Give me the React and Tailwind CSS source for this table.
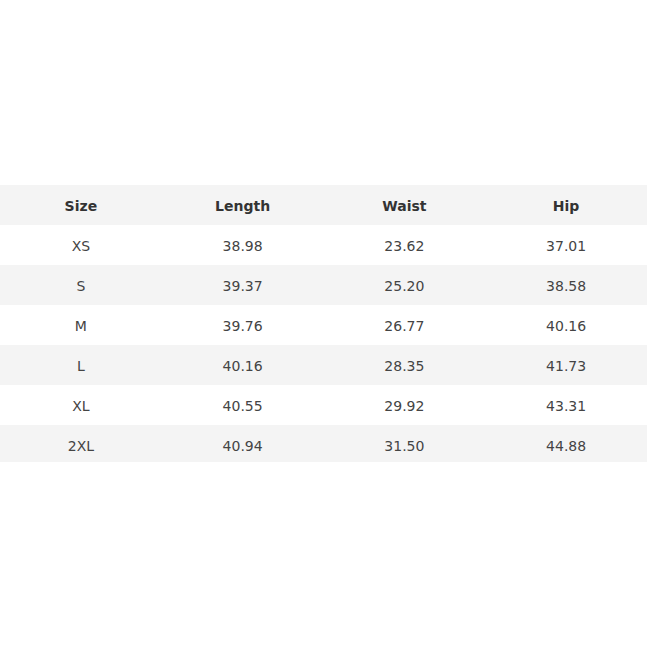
const rows = [
  ["XS", "38.98", "23.62", "37.01"],
  ["S", "39.37", "25.20", "38.58"],
  ["M", "39.76", "26.77", "40.16"],
  ["L", "40.16", "28.35", "41.73"],
  ["XL", "40.55", "29.92", "43.31"],
  ["2XL", "40.94", "31.50", "44.88"],
];

export default function App() {
  return (
    <div
      className="w-[647px] h-[647px] bg-white pt-[185px] text-[14px] leading-[20px] text-[#444]"
      style={{ fontFamily: '"DejaVu Sans", Verdana, sans-serif' }}
    >
      <div className="grid grid-cols-4 h-[40px] pt-[11px] bg-[#f4f4f4] font-bold text-[#333] text-center">
        <div>Size</div>
        <div>Length</div>
        <div>Waist</div>
        <div>Hip</div>
      </div>
      {rows.map((r, i) => (
        <div
          key={i}
          className={
            "grid grid-cols-4 pt-[11px] text-center " +
            (i % 2 === 1 ? "bg-[#f4f4f4] " : "bg-white ") +
            (i === rows.length - 1 ? "h-[37px]" : "h-[40px]")
          }
        >
          {r.map((c, j) => (
            <div key={j}>{c}</div>
          ))}
        </div>
      ))}
    </div>
  );
}
